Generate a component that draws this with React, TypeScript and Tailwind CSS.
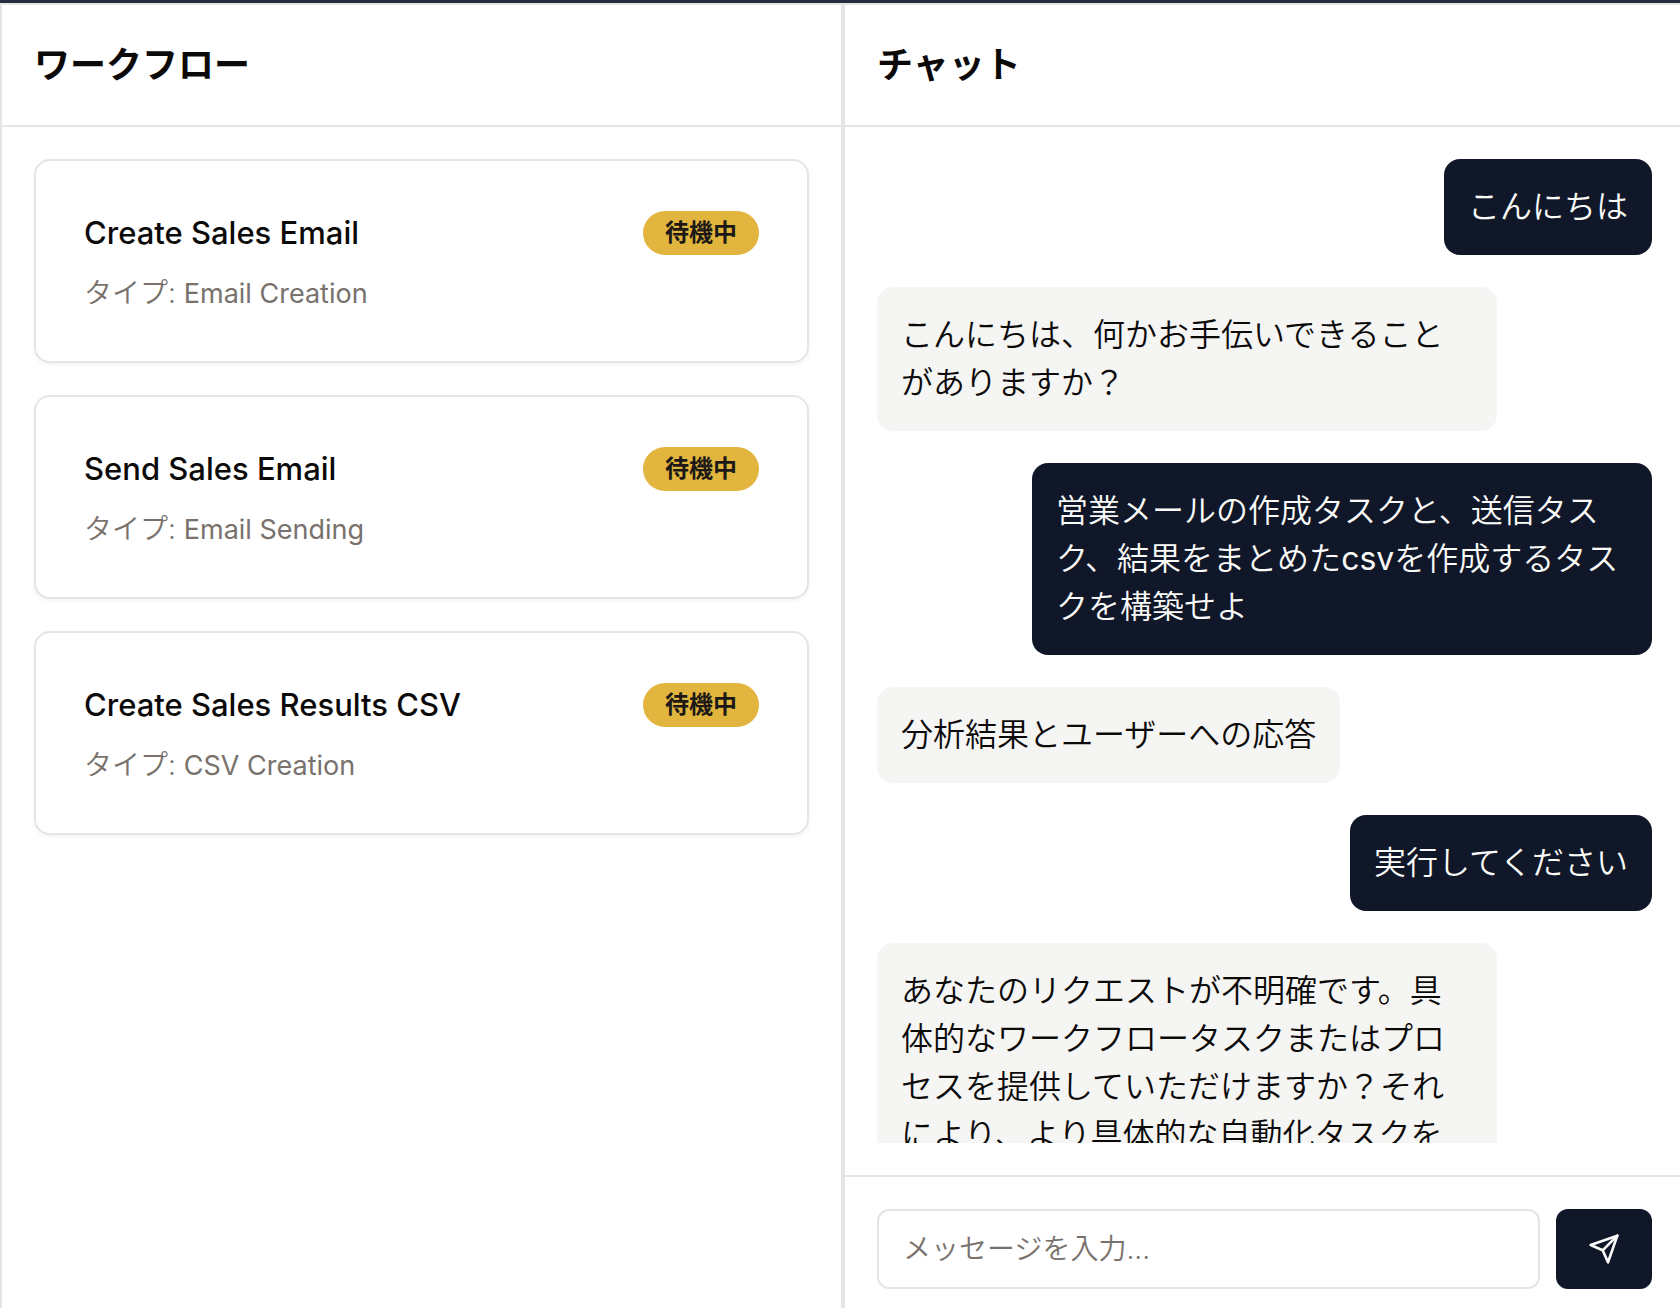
import React from "react";

const tasks = [
  { title: "Create Sales Email", type: "Email Creation" },
  { title: "Send Sales Email", type: "Email Sending" },
  { title: "Create Sales Results CSV", type: "CSV Creation" },
];

const messages = [
  { id: 1, mine: true, text: "こんにちは" },
  { id: 2, mine: false, text: "こんにちは、何かお手伝いできることがありますか？" },
  {
    id: 3,
    mine: true,
    text: (
      <>
        営業メールの作成タスクと、送信タスク、結果をまとめた<span className="leading-none font-normal">csv</span>
        を作成するタスクを構築せよ
      </>
    ),
  },
  { id: 4, mine: false, text: "分析結果とユーザーへの応答" },
  { id: 5, mine: true, text: "実行してください" },
  {
    id: 6,
    mine: false,
    text: "あなたのリクエストが不明確です。具体的なワークフロータスクまたはプロセスを提供していただけますか？それにより、より具体的な自動化タスクを",
  },
];

function SendIcon() {
  return (
    <svg
      viewBox="0 0 24 24"
      className="size-8"
      fill="none"
      stroke="currentColor"
      strokeWidth="2"
      strokeLinecap="round"
      strokeLinejoin="round"
      aria-hidden="true"
    >
      <path d="m22 2-7 20-4-9-9-4Z" />
      <path d="M22 2 11 13" />
    </svg>
  );
}

function PanelHeader({ children }: { children: React.ReactNode }) {
  return (
    <header className="shrink-0 border-b-2 border-[#e5e5e5] px-8 py-8">
      <h2 className="text-[36px] leading-[56px] font-semibold">{children}</h2>
    </header>
  );
}

function TaskCard({ title, type }: { title: string; type: string }) {
  return (
    <li className="rounded-2xl border-2 border-[#e5e5e5] bg-white p-12 shadow-[0_2px_4px_rgba(0,0,0,0.05)]">
      <div className="flex items-center justify-between">
        <h3 className="text-[31px] leading-[48px] font-medium">{title}</h3>
        <span className="rounded-full bg-[#e2b53e] px-[22px] py-1.5 text-[24px] leading-[32px] font-semibold text-[#1c1917]">
          待機中
        </span>
      </div>
      <p className="mt-4 text-[28px] leading-[40px] font-[350] text-[#78716c]">
        タイプ: <span className="text-[27px] leading-none font-normal">{type}</span>
      </p>
    </li>
  );
}

function Message({ mine, text }: { mine: boolean; text: React.ReactNode }) {
  return (
    <li
      className={
        mine
          ? "max-w-4/5 shrink-0 self-end rounded-2xl bg-[#101728] p-6 text-[#fafaf9]"
          : "max-w-4/5 shrink-0 self-start rounded-2xl bg-[#f5f5f4] p-6"
      }
    >
      <p className="text-[32px] leading-[48px] font-[350]">{text}</p>
    </li>
  );
}

export default function App() {
  return (
    <div className="flex h-screen flex-col overflow-hidden border-t-3 border-[#272b3f] bg-white font-['Inter','Noto_Sans_CJK_JP',sans-serif] text-[#0c0a09]">
      <main className="grid min-h-0 flex-1 grid-cols-[843fr_837fr] grid-rows-1 border-t-2 border-[#e5e5e5]">
        <section className="flex min-h-0 min-w-0 flex-col border-x-2 border-[#e5e5e5]">
          <PanelHeader>ワークフロー</PanelHeader>
          <ul className="flex flex-col gap-8 p-8">
            {tasks.map((task) => (
              <TaskCard key={task.title} {...task} />
            ))}
          </ul>
        </section>
        <section className="flex min-h-0 min-w-0 flex-col border-l-2 border-[#e5e5e5]">
          <PanelHeader>チャット</PanelHeader>
          <div className="flex min-h-0 flex-1 flex-col py-8 pr-7 pl-8">
            <ul className="flex min-h-0 flex-1 flex-col gap-8 overflow-hidden">
              {messages.map((message) => (
                <Message key={message.id} mine={message.mine} text={message.text} />
              ))}
            </ul>
          </div>
          <form
            className="flex shrink-0 gap-4 border-t-2 border-[#e5e5e5] pt-8 pr-7 pb-[19px] pl-8"
            onSubmit={(event) => event.preventDefault()}
          >
            <input
              type="text"
              aria-label="メッセージ"
              placeholder="メッセージを入力..."
              className="h-20 min-w-0 flex-1 rounded-xl border-2 border-[#e5e5e5] bg-white px-6 text-[28px] leading-[40px] font-[350] placeholder:text-[#78716c]"
            />
            <button
              type="submit"
              aria-label="送信"
              className="flex h-20 w-24 items-center justify-center rounded-xl bg-[#101728] text-[#fafaf9]"
            >
              <SendIcon />
            </button>
          </form>
        </section>
      </main>
    </div>
  );
}
